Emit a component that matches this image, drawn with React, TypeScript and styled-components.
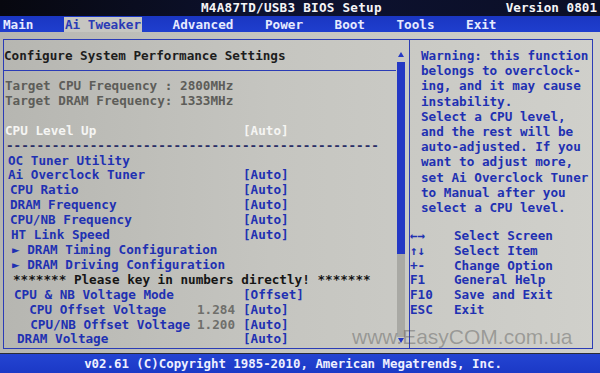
import React from 'react';
import styled, { createGlobalStyle } from 'styled-components';

const GlobalStyle = createGlobalStyle`
  html, body {
    margin: 0;
    padding: 0;
    background: #0d0e16;
  }
  body {
    width: 600px;
    height: 373px;
    overflow: hidden;
  }
`;

const MONO = `'DejaVu Sans Mono', 'Liberation Mono', monospace`;
const BLUE = '#1f31b2';
const LINE = '#2b3cb6';

const Screen = styled.div`
  position: relative;
  width: 600px;
  height: 373px;
  display: flex;
  flex-direction: column;
  background: #0d0e16;
  font: 700 12.65px/14.9px ${MONO};
  overflow: hidden;
`;

const TitleBar = styled.header`
  height: 16px;
  display: grid;
  grid-template-columns: 201px auto 1fr;
  align-items: center;
  line-height: 16px;
  color: #f4f4f6;
  background: linear-gradient(90deg, #07080f 0%, #0d1230 45%, #0b0f27 100%);
`;

const Title = styled.span`
  grid-column: 2;
  letter-spacing: 0.25px;
`;

const Version = styled.span`
  justify-self: end;
  padding-right: 3px;
`;

const TabBar = styled.nav`
  height: 16px;
  display: flex;
  gap: 29.5px;
  padding-left: 2px;
  background: linear-gradient(180deg, #1a36c2, #1f3ece);
`;

const Tab = styled.span<{ $active?: boolean }>`
  margin-top: 1px;
  padding: 0 1px;
  line-height: 15px;
  color: ${(p) => (p.$active ? '#2a3bb6' : '#e6eaff')};
  background: ${(p) => (p.$active ? '#c6c6c1' : 'transparent')};
`;

const Body = styled.main`
  flex: 1;
  display: flex;
  padding: 7px 7px 4px 3px;
  background: linear-gradient(90deg, #b6b6b1 0%, #c5c5c0 45%, #d0d0cb 100%);
  border-bottom: 1px solid #2a2c36;
`;

const Frame = styled.section`
  flex: 1;
  display: flex;
  border: 1px solid ${LINE};
`;

const LeftPanel = styled.div`
  width: 405px;
  display: flex;
  border-right: 1px solid ${LINE};
`;

const LeftMain = styled.div`
  flex: 1;
  display: flex;
  flex-direction: column;
  padding-top: 8px;
`;

const Heading = styled.div`
  line-height: 15px;
  color: #1d1d1d;
`;

const Divider = styled.div`
  height: 1px;
  margin: 7px 0 8px;
  background: ${LINE};
`;

type Tone = 'grey' | 'white' | 'blue' | 'dark' | 'rule';

const toneColor: Record<Tone, string> = {
  grey: '#5d5d59',
  white: '#f5f5f3',
  blue: BLUE,
  dark: '#151515',
  rule: '#2a2f66',
};

const Row = styled.div<{ $tone: Tone }>`
  display: grid;
  grid-template-columns: 193px 46px 1fr;
  white-space: pre;
  color: ${(p) => toneColor[p.$tone]};
`;

const Label = styled.span<{ $indent: number; $wide: boolean }>`
  padding-left: ${(p) => p.$indent}px;
  grid-column: ${(p) => (p.$wide ? '1 / -1' : 'auto')};
`;

const Num = styled.span`
  color: #6f6f6b;
`;

const ScrollBar = styled.div`
  width: 8px;
  margin: 8px 4px 5px 1px;
  display: flex;
  flex-direction: column;
  align-items: center;
`;

const ArrowUp = styled.div`
  width: 0;
  height: 0;
  margin-top: 4px;
  border-left: 3px solid transparent;
  border-right: 3px solid transparent;
  border-bottom: 5px solid #2438c4;
`;

const ArrowDown = styled.div`
  width: 0;
  height: 0;
  margin-top: 1px;
  border-left: 3px solid transparent;
  border-right: 3px solid transparent;
  border-top: 5px solid #2438c4;
`;

const Thumb = styled.div`
  align-self: stretch;
  height: 192px;
  margin-top: 5px;
  background: #2438c4;
`;

const Track = styled.div`
  flex: 1;
  align-self: stretch;
  background: #a9a9a4;
`;

const RightPanel = styled.aside`
  flex: 1;
  padding-top: 8px;
  color: ${BLUE};
`;

const Warning = styled.div`
  padding-left: 11px;
  line-height: 15.2px;
  white-space: pre;
`;

const Help = styled.div`
  margin-top: 14px;
  display: grid;
  grid-template-columns: 44px 1fr;
  line-height: 14.7px;
  white-space: pre;
`;

const Footer = styled.footer`
  height: 19px;
  padding-right: 14px;
  text-align: center;
  font-size: 12.4px;
  line-height: 19px;
  color: #eef0ff;
  background: linear-gradient(180deg, #2444d2, #1b39c6);
`;

const Watermark = styled.div`
  position: absolute;
  left: 352px;
  top: 326px;
  font: 400 21px/21px 'Liberation Sans', Arial, sans-serif;
  color: rgba(70, 70, 70, 0.38);
  pointer-events: none;
`;

type Item = {
  label: string;
  tone?: Tone;
  indent: number;
  num?: string;
  value?: string;
};

const items: Item[] = [
  { label: 'Target CPU Frequency : 2800MHz', tone: 'grey', indent: 1 },
  { label: 'Target DRAM Frequency: 1333MHz', tone: 'grey', indent: 1 },
  { label: '\u00a0', indent: 0 },
  { label: 'CPU Level Up', tone: 'white', indent: 1, value: '[Auto]' },
  { label: '-'.repeat(49), tone: 'rule', indent: 2 },
  { label: 'OC Tuner Utility', indent: 4 },
  { label: 'Ai Overclock Tuner', indent: 4, value: '[Auto]' },
  { label: 'CPU Ratio', indent: 6, value: '[Auto]' },
  { label: 'DRAM Frequency', indent: 6, value: '[Auto]' },
  { label: 'CPU/NB Frequency', indent: 6, value: '[Auto]' },
  { label: 'HT Link Speed', indent: 7, value: '[Auto]' },
  { label: '\u25ba DRAM Timing Configuration', indent: 8 },
  { label: '\u25ba DRAM Driving Configuration', indent: 8 },
  { label: '******* Please key in numbers directly! *******', tone: 'dark', indent: 9 },
  { label: 'CPU & NB Voltage Mode', indent: 10, value: '[Offset]' },
  { label: '  CPU Offset Voltage', indent: 10, num: '1.284', value: '[Auto]' },
  { label: '  CPU/NB Offset Voltage', indent: 11, num: '1.200', value: '[Auto]' },
  { label: 'DRAM Voltage', indent: 13, value: '[Auto]' },
];

const warning = [
  'Warning: this function',
  'belongs to overclock-',
  'ing, and it may cause',
  'instability.',
  'Select a CPU level,',
  'and the rest will be',
  'auto-adjusted. If you',
  'want to adjust more,',
  'set Ai Overclock Tuner',
  'to Manual after you',
  'select a CPU level.',
];

const keys = [
  ['\u2190\u2192', 'Select Screen'],
  ['\u2191\u2193', 'Select Item'],
  ['+-', 'Change Option'],
  ['F1', 'General Help'],
  ['F10', 'Save and Exit'],
  ['ESC', 'Exit'],
];

const tabs = ['Main', 'Ai Tweaker', 'Advanced', 'Power', 'Boot', 'Tools', 'Exit'];

export default function App() {
  return (
    <>
      <GlobalStyle />
      <Screen>
        <TitleBar>
          <Title>M4A87TD/USB3 BIOS Setup</Title>
          <Version>Version 0801</Version>
        </TitleBar>
        <TabBar>
          {tabs.map((t) => (
            <Tab key={t} $active={t === 'Ai Tweaker'}>
              {t}
            </Tab>
          ))}
        </TabBar>
        <Body>
          <Frame>
            <LeftPanel>
              <LeftMain>
                <Heading>Configure System Performance Settings</Heading>
                <Divider />
                {items.map((it, i) => (
                  <Row key={i} $tone={it.tone ?? 'blue'}>
                    <Label $indent={it.indent} $wide={!it.value}>
                      {it.label}
                    </Label>
                    {it.value && <Num>{it.num ?? ''}</Num>}
                    {it.value && <span>{it.value}</span>}
                  </Row>
                ))}
              </LeftMain>
              <ScrollBar>
                <ArrowUp />
                <Thumb />
                <Track />
                <ArrowDown />
              </ScrollBar>
            </LeftPanel>
            <RightPanel>
              <Warning>{warning.join('\n')}</Warning>
              <Help>
                {keys.map(([k, d]) => (
                  <React.Fragment key={k}>
                    <span>{k}</span>
                    <span>{d}</span>
                  </React.Fragment>
                ))}
              </Help>
            </RightPanel>
          </Frame>
        </Body>
        <Footer>v02.61 (C)Copyright 1985-2010, American Megatrends, Inc.</Footer>
        <Watermark>www.EasyCOM.com.ua</Watermark>
      </Screen>
    </>
  );
}
